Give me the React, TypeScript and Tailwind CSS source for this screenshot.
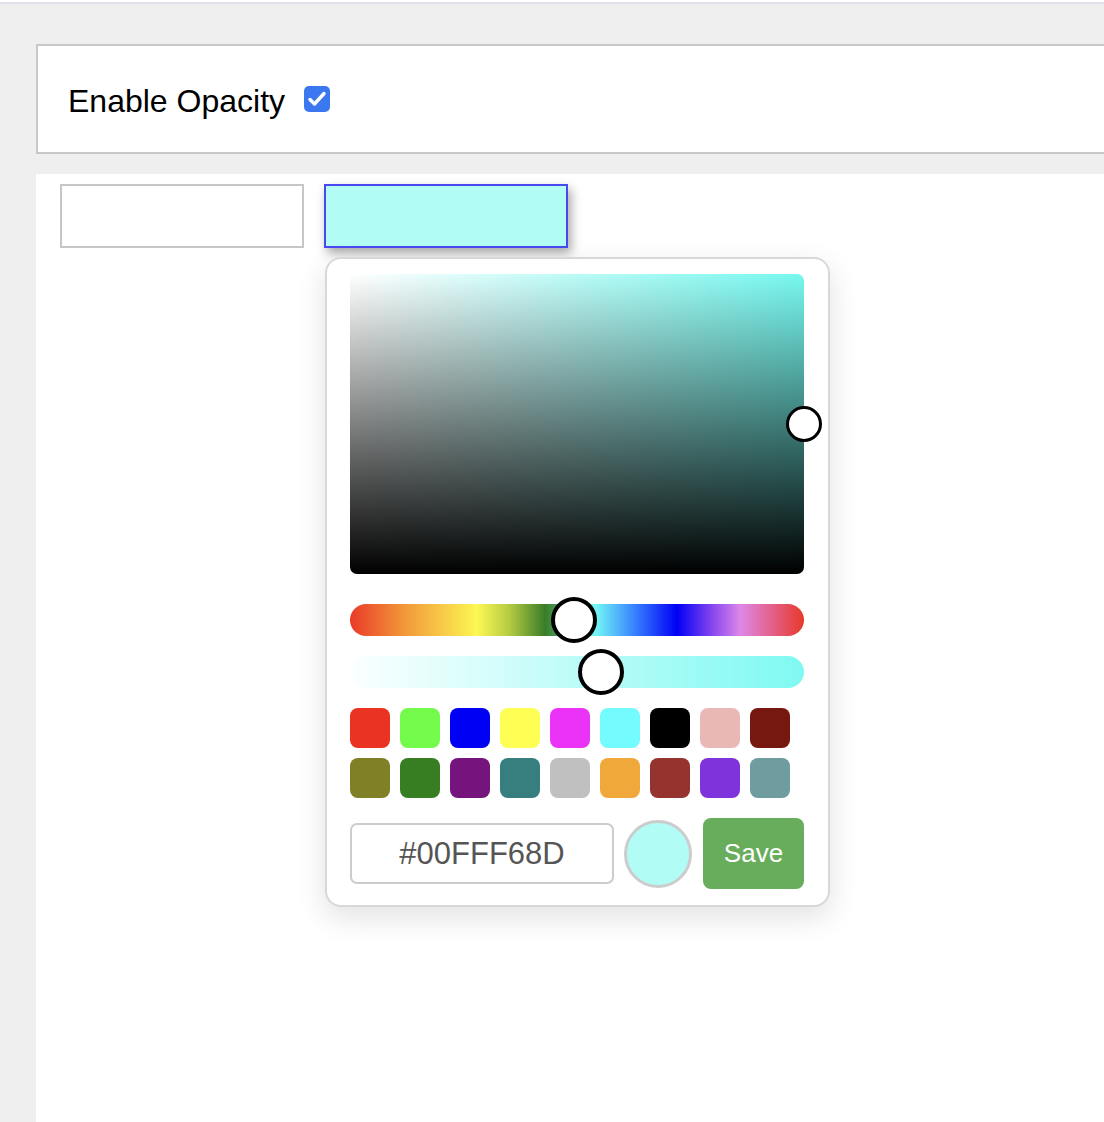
import { useState } from 'react';

const swatches = [
  '#ea3323', '#75fb4c', '#0000f5', '#fffe54', '#ea33f7', '#73fbfd', '#000000', '#e9b8b4', '#761710',
  '#808026', '#377d22', '#75147c', '#377e7f', '#c0c0c0', '#f0a83b', '#95342f', '#7f33da', '#6f9c9e',
];

export default function App() {
  const [enabled, setEnabled] = useState(true);
  const [hex, setHex] = useState('#00FFF68D');

  return (
    <div className="min-h-screen bg-[#efefef] font-['Liberation_Sans',Arial,sans-serif] text-black">
      <div className="h-[2px] bg-white" />
      <div className="h-[2px] bg-[#e2e0ea]" />

      {/* Options bar */}
      <div className="pl-9 pt-10 pb-5">
        <div className="h-[110px] border-2 border-r-0 border-[#c8c8c8] bg-white flex items-center pl-[30px] gap-[19px]">
          <span className="mt-[4px] text-[32px] leading-none">Enable Opacity</span>
          <button
            type="button"
            onClick={() => setEnabled(!enabled)}
            className={`w-[26px] h-[26px] rounded-[5px] flex items-center justify-center ${enabled ? 'bg-[#3b78f0]' : 'bg-white border-2 border-gray-400'}`}
          >
            {enabled && (
              <svg viewBox="0 0 24 24" className="w-[24px] h-[24px]" fill="none" stroke="white" strokeWidth="3.4" strokeLinecap="round" strokeLinejoin="round">
                <path d="M5 12.5l4.5 4.5L19 6.5" />
              </svg>
            )}
          </button>
        </div>
      </div>

      {/* Content */}
      <div className="ml-9 bg-white min-h-[948px] pt-[10px] pl-6">
        <div className="flex gap-5">
          <div className="w-[244px] h-[64px] border-2 border-[#c6c6c6] bg-white" />
          <div className="relative">
            <div className="w-[244px] h-[64px] border-2 border-[#4b48f0] bg-[#b2fcf6] shadow-[3px_5px_10px_rgba(0,0,0,0.35)]" />

            {/* Picker popover */}
            <div className="absolute left-[1px] top-[73px] z-10 w-[505px] rounded-[16px] border-2 border-[#d8d8d8] bg-white pl-[23px] pr-[24px] pt-[15px] pb-[16px] shadow-[0_10px_30px_rgba(0,0,0,0.12)]">
              {/* Saturation area */}
              <div className="relative w-[454px] h-[300px] rounded-[7px] bg-[#76f8ef] bg-[linear-gradient(to_top,#000,rgba(0,0,0,0)),linear-gradient(to_right,#fff,rgba(255,255,255,0))]">
                <div className="absolute left-[436px] top-[132px] w-[36px] h-[36px] rounded-full border-[3px] border-black bg-white" />
              </div>

              {/* Hue */}
              <div className="relative mt-[30px] h-[32px] w-[454px] rounded-full bg-[linear-gradient(to_right,#ea3a28_0%,#f2983a_12%,#fcf853_28%,#b6cc42_35%,#3a7d28_43%,#73f8f4_54%,#3c8bff_62%,#0000f5_72%,#8a48ee_80%,#dd88e8_86%,#e8392a_100%)]">
                <div className="absolute left-[201px] top-[-7px] w-[46px] h-[46px] rounded-full border-4 border-black bg-white" />
              </div>

              {/* Alpha */}
              <div className="relative mt-[20px] h-[32px] w-[454px] rounded-full bg-[linear-gradient(to_right,#fbffff,#7ff9f2)]">
                <div className="absolute left-[228px] top-[-7px] w-[46px] h-[46px] rounded-full border-4 border-black bg-white" />
              </div>

              {/* Swatches */}
              <div className="mt-[20px] grid grid-cols-9 gap-[10px] w-fit">
                {swatches.map((c) => (
                  <button
                    key={c}
                    type="button"
                    className="w-[40px] h-[40px] rounded-[8px]"
                    style={{ backgroundColor: c }}
                  />
                ))}
              </div>

              {/* Footer */}
              <div className="mt-[20px] flex items-center">
                <input
                  value={hex}
                  onChange={(e) => setHex(e.target.value)}
                  className="w-[264px] h-[61px] rounded-[7px] border-2 border-[#cccccc] text-center text-[31px] text-[#555] outline-none"
                />
                <div className="ml-[10px] w-[68px] h-[68px] rounded-full border-[3px] border-[#cccccc] bg-[#b2fcf6]" />
                <button
                  type="button"
                  className="ml-[11px] w-[101px] h-[71px] rounded-[8px] bg-[#67ad5b] text-white text-[26px]"
                >
                  Save
                </button>
              </div>
            </div>
          </div>
        </div>
      </div>
    </div>
  );
}
